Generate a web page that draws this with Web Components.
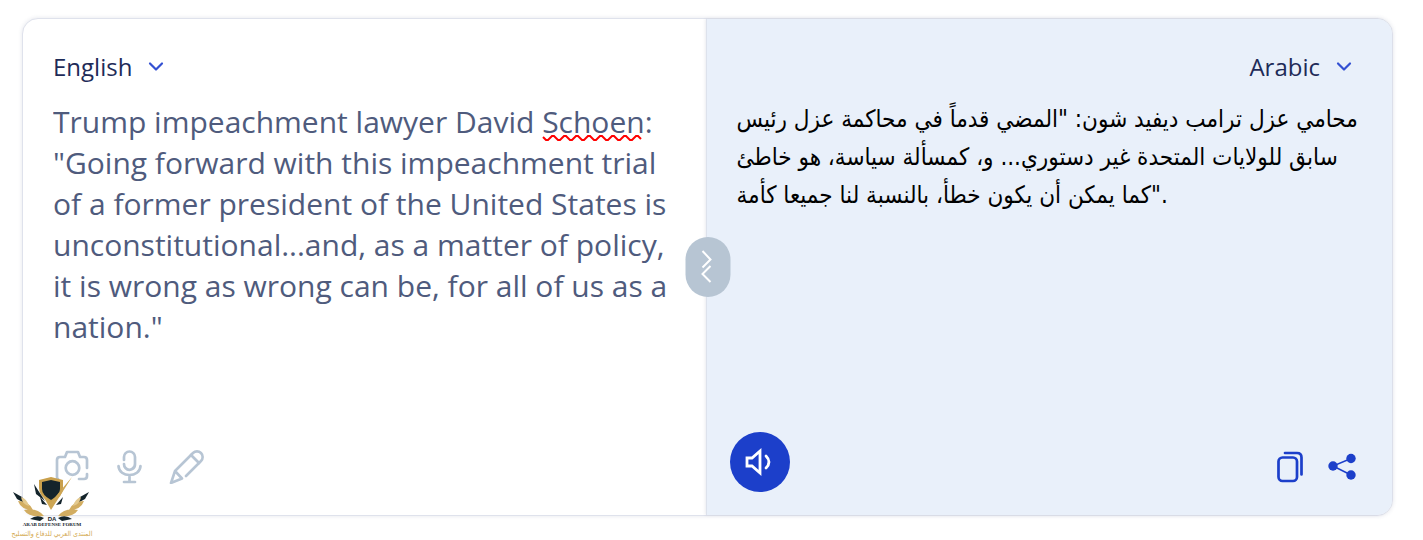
<!DOCTYPE html>
<html lang="en">
<head>
<meta charset="utf-8">
<meta name="viewport" content="width=device-width, initial-scale=1">
<title>Translator</title>
<style>
  html, body { margin: 0; background: #fff; }
  body { font-family: "Open Sans", "Liberation Sans", sans-serif; color: #1e2b58; }
</style>
</head>
<body>
<translator-app></translator-app>

<template id="t-app">
  <style>
    :host { box-sizing: border-box; min-height: 100vh; padding: 18px 30px 24px 22px; position: relative; overflow: hidden; display: flex; }
    main { flex: 1; display: grid; grid-template-columns: calc(50% - 2px) 1fr; position: relative; border: 1px solid #dfe2ec; border-radius: 16px; box-shadow: 0 0 4px rgba(60, 70, 110, .14); background: #fff; }
    swap-handle { position: absolute; left: 50%; top: 50%; transform: translate(-50%, -50%); }
    forum-badge { position: absolute; left: 12px; bottom: 0; }
  </style>
  <main>
    <source-panel></source-panel>
    <target-panel></target-panel>
    <swap-handle></swap-handle>
  </main>
  <forum-badge></forum-badge>
</template>

<template id="t-lang">
  <style>
    :host { display: inline-block; }
    label { display: flex; align-items: center; position: relative; }
    select { appearance: none; border: 0; margin: 0; padding: 0 32px 0 0; background: none; font: 24px/34px "Open Sans", sans-serif; color: #1e2b58; field-sizing: content; cursor: pointer; }
    svg { position: absolute; right: 0; top: 10px; pointer-events: none; }
  </style>
  <label>
    <select></select>
    <svg width="16" height="12" viewBox="0 0 16 12" fill="none" stroke="#3350d2" stroke-width="2.200" stroke-linecap="round" stroke-linejoin="round" aria-hidden="true"><path d="M2 3.500l6 6 6-6"/></svg>
  </label>
</template>

<template id="t-source">
  <style>
    :host { display: flex; flex-direction: column; box-sizing: border-box; padding: 31px 30px 31px; min-width: 0; }
    language-select { align-self: flex-start; }
    .editor { position: relative; flex: 1; margin: 17px -6px 0 0; }
    textarea { display: block; box-sizing: border-box; width: 100%; height: 100%; min-height: 246px; padding: 0; border: 0; outline: 0; resize: none; overflow: hidden; background: none; font: 30px/41px "Open Sans", sans-serif; color: #4f5b7d; }
    .squiggle { position: absolute; left: 489px; top: 33px; pointer-events: none; }
    .tools { display: flex; align-items: center; gap: 24px; margin-top: 16px; }
    button { display: block; width: 34px; height: 36px; border: 0; padding: 0; background: none; cursor: pointer; }
    svg { display: block; }
  </style>
  <language-select label="Source language" value="English"></language-select>
  <div class="editor">
    <textarea aria-label="Text to translate" spellcheck="false">Trump impeachment lawyer David Schoen: "Going forward with this impeachment trial of a former president of the United States is unconstitutional...and, as a matter of policy, it is wrong as wrong can be, for all of us as a nation."</textarea>
    <svg class="squiggle" width="104" height="8" viewBox="0 0 104 8" fill="none" stroke="#f00" stroke-width="2" aria-hidden="true"><path d="M1 3l3 3h2l4-4h2l4 4h2l4-4h2l4 4h2l4-4h2l4 4h2l4-4h2l4 4h2l4-4h2l4 4h2l4-4h2l4 4h2l4-4h2l4 4h2l4-4h2l3 3"/></svg>
  </div>
  <div class="tools">
    <button type="button" aria-label="Translate a picture"><svg width="36" height="36" viewBox="0 0 36 36" fill="none" stroke="#b7c5d4" stroke-width="2.700" stroke-linecap="round" stroke-linejoin="round"><path d="M5 31a2 2 0 0 1-1-2V12q0-3 3-3h5l2-5h11l2 5h4q3 0 3 3v8M26 31h5q3 0 3-3v-2"/><circle cx="19.500" cy="20" r="6.800"/></svg></button>
    <button type="button" aria-label="Speak"><svg width="34" height="36" viewBox="0 0 34 36" fill="none" stroke="#b7c5d4" stroke-width="2.700" stroke-linecap="round" stroke-linejoin="round"><path d="M13 12V9a5.500 5.500 0 0 1 11 0v7a5.500 5.500 0 0 1-9.500 4Q13 18.500 13 16"/><path d="M7.500 18C8 30 29 30 29.500 18M18.500 27v6M13 34h11"/></svg></button>
    <button type="button" aria-label="Handwriting"><svg width="36" height="36" viewBox="0 0 36 36" fill="none" stroke="#b7c5d4" stroke-width="2.600" stroke-linecap="round" stroke-linejoin="round"><path d="M17 28L32 13a5 5 0 0 0-8-8L6 23 2 35l11-4.500L6 23"/><path d="M22 7l8 8"/></svg></button>
  </div>
</template>

<template id="t-target">
  <style>
    :host { display: flex; flex-direction: column; box-sizing: border-box; padding: 31px 30px 23px 29px; background: #e9f0fa; border-left: 1px solid #dde2ec; border-radius: 0 15px 15px 0; box-shadow: -1px 0 3px rgba(60, 70, 110, .1); min-width: 0; }
    language-select { align-self: flex-end; margin-right: 10px; }
    p { margin: 16px 0 0 1px; flex: 1; font: 24px/38px "DejaVu Sans Condensed", "Liberation Sans", sans-serif; color: #000; white-space: nowrap; text-align: left; }
    .tools { display: flex; align-items: center; justify-content: space-between; margin: 16px 4px 0 -6px; }
    .actions { display: flex; gap: 20px; margin-top: 9px; }
    button { display: flex; align-items: center; justify-content: center; width: 32px; height: 36px; border: 0; padding: 0; background: none; cursor: pointer; }
    .listen { width: 60px; height: 60px; border-radius: 50%; background: #1c3fca; }
  </style>
  <language-select label="Target language" value="Arabic"></language-select>
  <p lang="ar" dir="ltr">محامي عزل ترامب ديفيد شون: "المضي قدماً في محاكمة عزل رئيس<br>سابق للولايات المتحدة غير دستوري... و، كمسألة سياسة، هو خاطئ<br>كما يمكن أن يكون خطأ، بالنسبة لنا جميعا كأمة".</p>
  <div class="tools">
    <button class="listen" type="button" aria-label="Listen"><svg width="30" height="30" viewBox="0 0 30 30" fill="none" stroke="#fff" stroke-width="2.800" stroke-linecap="round"><path d="M2 11h5l8-7v22l-8-7H2z"/><path d="M21 9q6 6 0 12"/></svg></button>
    <div class="actions">
      <button type="button" aria-label="Copy"><svg width="32" height="36" viewBox="0 0 32 36" fill="none" stroke="#1c3fca" stroke-width="2.700" stroke-linecap="round"><rect x="4.500" y="8.500" width="18.500" height="23.500" rx="4"/><path d="M11 4h12q4.500 0 4.500 4.500v17"/></svg></button>
      <button type="button" aria-label="Share"><svg width="32" height="36" viewBox="0 0 32 36" fill="#1c3fca" stroke="#1c3fca" stroke-width="1.500"><path d="M25 9.500L7 17l18 9" fill="none"/><g stroke="none"><circle cx="7" cy="17" r="4.700"/><circle cx="25" cy="9.500" r="4.700"/><circle cx="25" cy="26" r="4.700"/></g></svg></button>
    </div>
  </div>
</template>

<template id="t-swap">
  <style>
    :host { display: block; }
    button { display: flex; align-items: center; justify-content: center; width: 45px; height: 60px; border: 0; border-radius: 23px; padding: 0; background: #b7c5d3; cursor: pointer; }
  </style>
  <button type="button" aria-label="Swap languages"><svg width="16" height="36" viewBox="0 0 16 36" fill="none" stroke="#fff" stroke-width="2"><path d="M3 2l8 8.500-8 8M11 17l-8 8 8 8"/></svg></button>
</template>

<template id="t-badge">
  <style>
    :host { display: flex; flex-direction: column; align-items: center; width: 80px; pointer-events: none; text-align: center; }
    svg { display: block; margin-bottom: -6px; }
    b { font: bold 5px/6px "Liberation Serif", serif; color: #14242b; white-space: nowrap; }
    span { font: 7px/12px "DejaVu Sans Condensed", sans-serif; color: #d3a951; white-space: nowrap; }
    .mark { font: bold 6px/6px "Liberation Sans", sans-serif; }
  </style>
  <svg width="80" height="45" viewBox="0 0 80 45" aria-hidden="true">
    <path d="M27 3l12-3 12 3v8q0 9-12 15Q27 20 27 11z" fill="#c9a04c"/>
    <path d="M30 5l9-2 9 2v7q0 6-9 11-9-5-9-11z" fill="#14242b"/>
    <path d="M30 17l9 8L60 0 39 33z" fill="#cda654"/>
    <path d="M22 7l11 17-9-7zM28 20l7 8-5-1zM51 20l-7 8 5-1z" fill="#14242b"/>
    <g id="wing">
      <path d="M1 15l9 5 4 7-9-5z" fill="#14242b"/>
      <path d="M6 24q11 0 15 9Q9 33 6 24zM12 33q13-3 20 6-15 2-20-6z" fill="#d2ad61"/>
      <path d="M18 42q7-5 14-1l-4 3z" fill="#14242b"/>
      <path d="M9 20q6 2 8 9-7-2-8-9z" fill="#e3c98e"/>
    </g>
    <use href="#wing" transform="translate(78 0) scale(-1 1)"/>
  </svg>
  <b class="mark">DA</b>
  <b>ARAB DEFENSE FORUM</b>
  <span lang="ar" dir="rtl">المنتدى العربي للدفاع والتسليح</span>
</template>

<script>
  class TemplateElement extends HTMLElement {
    constructor() {
      super();
      this.attachShadow({ mode: "open" }).append(
        document.getElementById(this.constructor.template).content.cloneNode(true));
    }
  }
  class LanguageSelect extends TemplateElement {
    static template = "t-lang";
    connectedCallback() {
      const select = this.shadowRoot.querySelector("select");
      select.setAttribute("aria-label", this.getAttribute("label"));
      select.replaceChildren(new Option(this.getAttribute("value")));
    }
  }
  class SourcePanel extends TemplateElement { static template = "t-source"; }
  class TargetPanel extends TemplateElement { static template = "t-target"; }
  class SwapHandle extends TemplateElement { static template = "t-swap"; }
  class ForumBadge extends TemplateElement { static template = "t-badge"; }
  class TranslatorApp extends TemplateElement { static template = "t-app"; }
  customElements.define("language-select", LanguageSelect);
  customElements.define("source-panel", SourcePanel);
  customElements.define("target-panel", TargetPanel);
  customElements.define("swap-handle", SwapHandle);
  customElements.define("forum-badge", ForumBadge);
  customElements.define("translator-app", TranslatorApp);
</script>
</body>
</html>
